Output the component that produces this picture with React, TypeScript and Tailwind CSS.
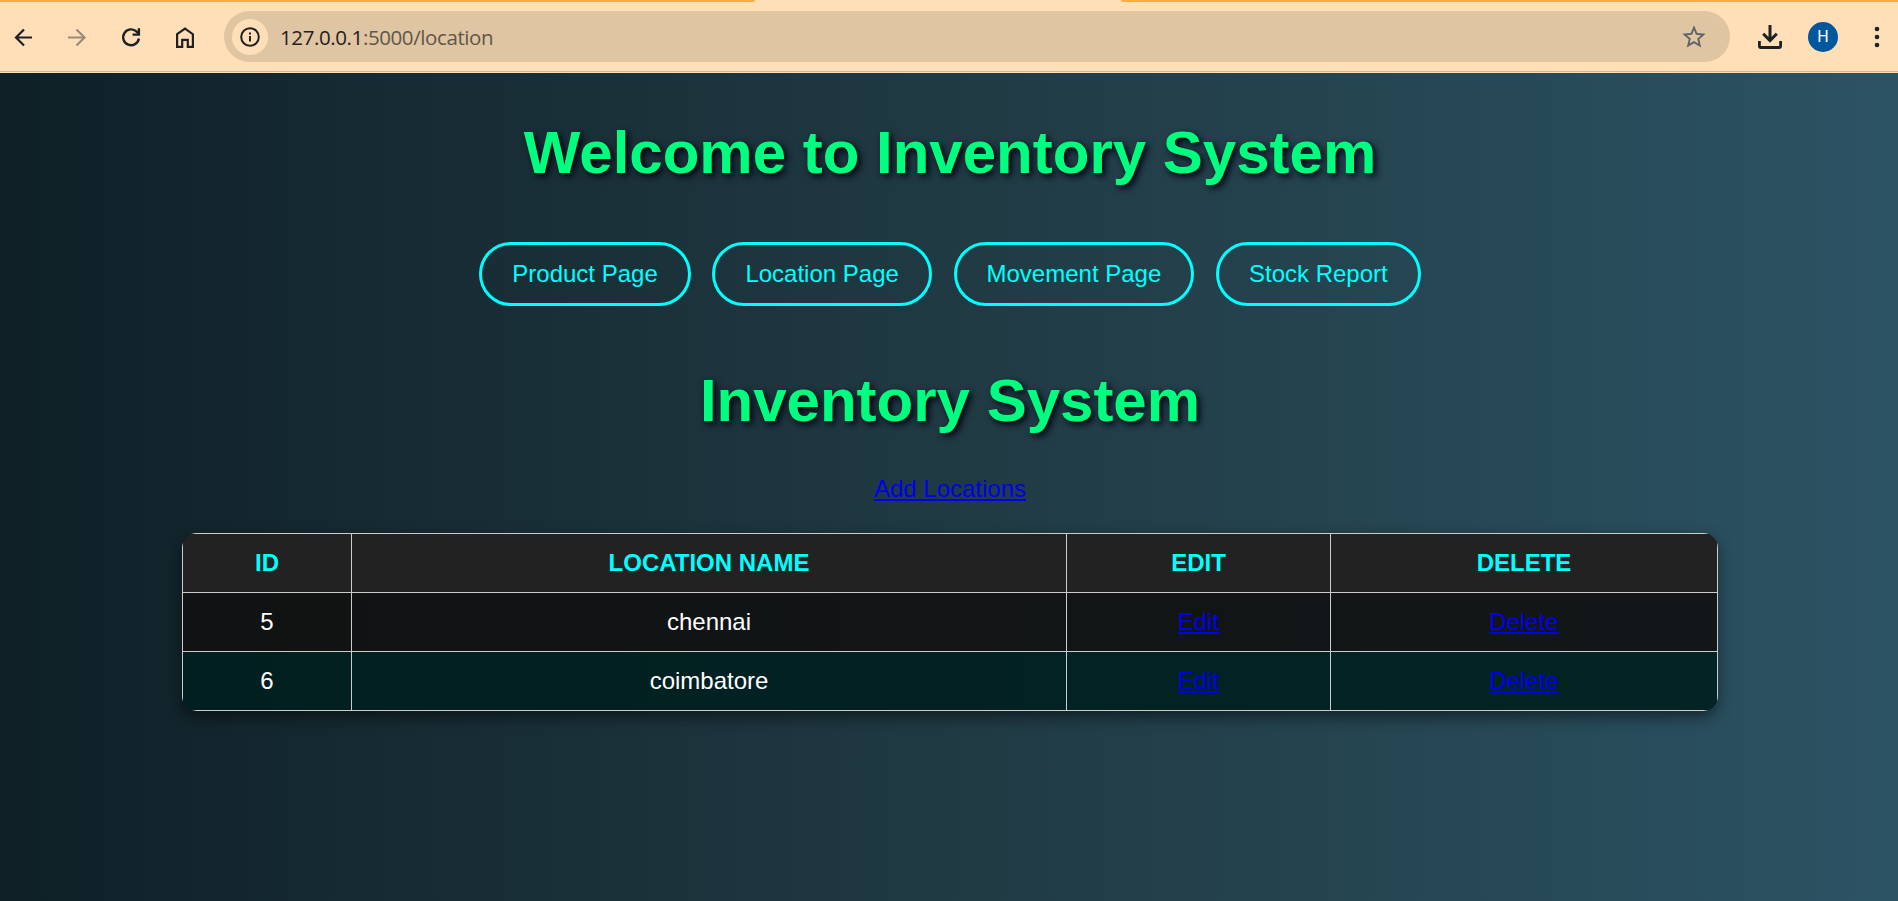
import React from "react";
import { MdStarBorder } from "react-icons/md";

const links = ["Product Page", "Location Page", "Movement Page", "Stock Report"];
const rows = [
  { id: 5, name: "chennai" },
  { id: 6, name: "coimbatore" },
];

function Toolbar() {
  return (
    <header className="h-[73px] shrink-0 bg-[#ffdfb8] flex flex-col">
      <div className="h-[2px] flex justify-between">
        <div className="w-[755px] bg-[#ffab40] rounded-br-[4px]" />
        <div className="w-[777px] bg-[#ffab40] rounded-bl-[4px]" />
      </div>
      <div className="h-[70px] py-px flex items-center border-b border-[#c5b6a2]">
        <div className="w-[224px] flex items-center pl-[12px] gap-[32px] text-[#1f2024]">
          <svg width="22" height="22" viewBox="0 0 22 22" fill="none" stroke="currentColor" strokeWidth="2.2">
            <path d="M20 11.5H4M12 3.5L4 11.5L12 19.5" />
          </svg>
          <svg width="22" height="22" viewBox="0 0 22 22" fill="none" stroke="#9d8b76" strokeWidth="2.2">
            <path d="M2 11.5H18.5M10.5 3.5L18.5 11.5L10.5 19.5" />
          </svg>
          <svg width="22" height="22" viewBox="0 0 22 22" fill="none" stroke="currentColor" strokeWidth="2.4">
            <path d="M18.9 12.5A7.9 7.9 0 1 1 16.6 5.6L18.4 7.4" />
            <path d="M18.9 2.2V8.6H12.6" />
          </svg>
          <svg width="22" height="22" viewBox="0 0 22 22" fill="none" stroke="currentColor" strokeWidth="2.2">
            <path d="M3.1 8.2L11 2.5L18.9 8.2V20.9H13.8V13.9H8.2V20.9H3.1Z" />
          </svg>
        </div>
        <div className="w-[1506px] h-[51px] rounded-full bg-[#dfc5a2] flex items-center pl-[8px] pr-[22px]">
          <div className="w-[36px] h-[36px] rounded-full bg-[#ffdfb8] flex items-center justify-center">
            <svg width="20" height="20" viewBox="0 0 20 20" fill="none" stroke="#1f2024" strokeWidth="2">
              <circle cx="10" cy="10" r="8.8" />
              <path d="M10 9V14.6M10 5.4V7.4" />
            </svg>
          </div>
          <div className="flex-1 pl-[12px] font-['Open_Sans',sans-serif] text-[20.5px] leading-[28px] tracking-[-0.4px] text-[#5f564c] whitespace-nowrap">
            <span className="text-[#1f2024]">127.0.0.1</span>:5000/location
          </div>
          <MdStarBorder size={28} color="#5f6368" />
        </div>
        <div className="flex-1 flex items-center pl-[28px]">
          <svg width="24" height="24" viewBox="0 0 24 24" fill="none" stroke="#1f2024" strokeWidth="3">
            <path d="M12 0V14.5M5.2 8.8L12 15.6L18.8 8.8" />
            <path d="M1.4 16V20.9Q1.4 22.5 3 22.5H21Q22.6 22.5 22.6 20.9V16" strokeWidth="2.8" />
          </svg>
          <div className="ml-[26px] w-[30px] h-[30px] rounded-full bg-[#02569b] text-white flex items-center justify-center font-[Roboto,sans-serif] text-[16px] leading-none">
            H
          </div>
          <svg className="ml-[36px]" width="6" height="22" viewBox="0 0 6 22" fill="#1f2024">
            <circle cx="3" cy="3" r="2.3" />
            <circle cx="3" cy="11" r="2.3" />
            <circle cx="3" cy="19" r="2.3" />
          </svg>
        </div>
      </div>
    </header>
  );
}

function Title({ children }: { children: React.ReactNode }) {
  return (
    <h1 className="text-[60px] leading-[69px] font-bold text-[#00ff7f] [text-shadow:3px_3px_7.5px_#000010]">
      {children}
    </h1>
  );
}

function Link({ children }: { children: React.ReactNode }) {
  return (
    <a href="#" className="text-[#0000ee] underline decoration-2 underline-offset-2 [text-decoration-skip-ink:none]">
      {children}
    </a>
  );
}

export default function App() {
  return (
    <div className="w-full h-[901px] flex flex-col overflow-hidden">
      <Toolbar />
      <main className="flex-1 flex flex-col items-center bg-[linear-gradient(to_right,#0f2027,#203a43,#2c5364)] pt-[45px] pl-[2px] font-['Liberation_Sans',Arial,sans-serif] text-[24px] leading-[27px] text-white">
        <Title>Welcome to Inventory System</Title>
        <nav className="mt-[55px] flex gap-[21.67px]">
          {links.map((l) => (
            <a key={l} href="#" className="h-[64px] px-[30px] pt-[15px] rounded-full border-3 border-[#00ffff] text-[#00ffff] whitespace-nowrap">
              {l}
            </a>
          ))}
        </nav>
        <div className="mt-[60px]">
          <Title>Inventory System</Title>
        </div>
        <div className="mt-[40px]">
          <Link>Add Locations</Link>
        </div>
        <div className="mt-[31px] mr-px w-[1535px] rounded-[15px] shadow-[0_6px_15px_rgba(0,0,0,0.5)]">
          <table className="w-full table-fixed border-collapse overflow-hidden rounded-[15px] text-center">
            <colgroup>
              <col className="w-[169px]" />
              <col className="w-[715px]" />
              <col className="w-[264px]" />
              <col className="w-[387px]" />
            </colgroup>
            <thead>
              <tr className="h-[59px] bg-[#222222] text-[#00ffff]">
                {["ID", "LOCATION NAME", "EDIT", "DELETE"].map((h) => (
                  <th key={h} className="border border-[#cccccc] font-bold pb-[2px]">{h}</th>
                ))}
              </tr>
            </thead>
            <tbody>
              {rows.map((r) => (
                <tr key={r.id} className="h-[59px] odd:bg-[rgba(17,17,17,0.9)] even:bg-[rgba(0,31,31,0.9)]">
                  <td className="border border-[#cccccc] pb-[2px]">{r.id}</td>
                  <td className="border border-[#cccccc] pb-[2px]">{r.name}</td>
                  <td className="border border-[#cccccc] pb-[2px]"><Link>Edit</Link></td>
                  <td className="border border-[#cccccc] pb-[2px]"><Link>Delete</Link></td>
                </tr>
              ))}
            </tbody>
          </table>
        </div>
      </main>
    </div>
  );
}
